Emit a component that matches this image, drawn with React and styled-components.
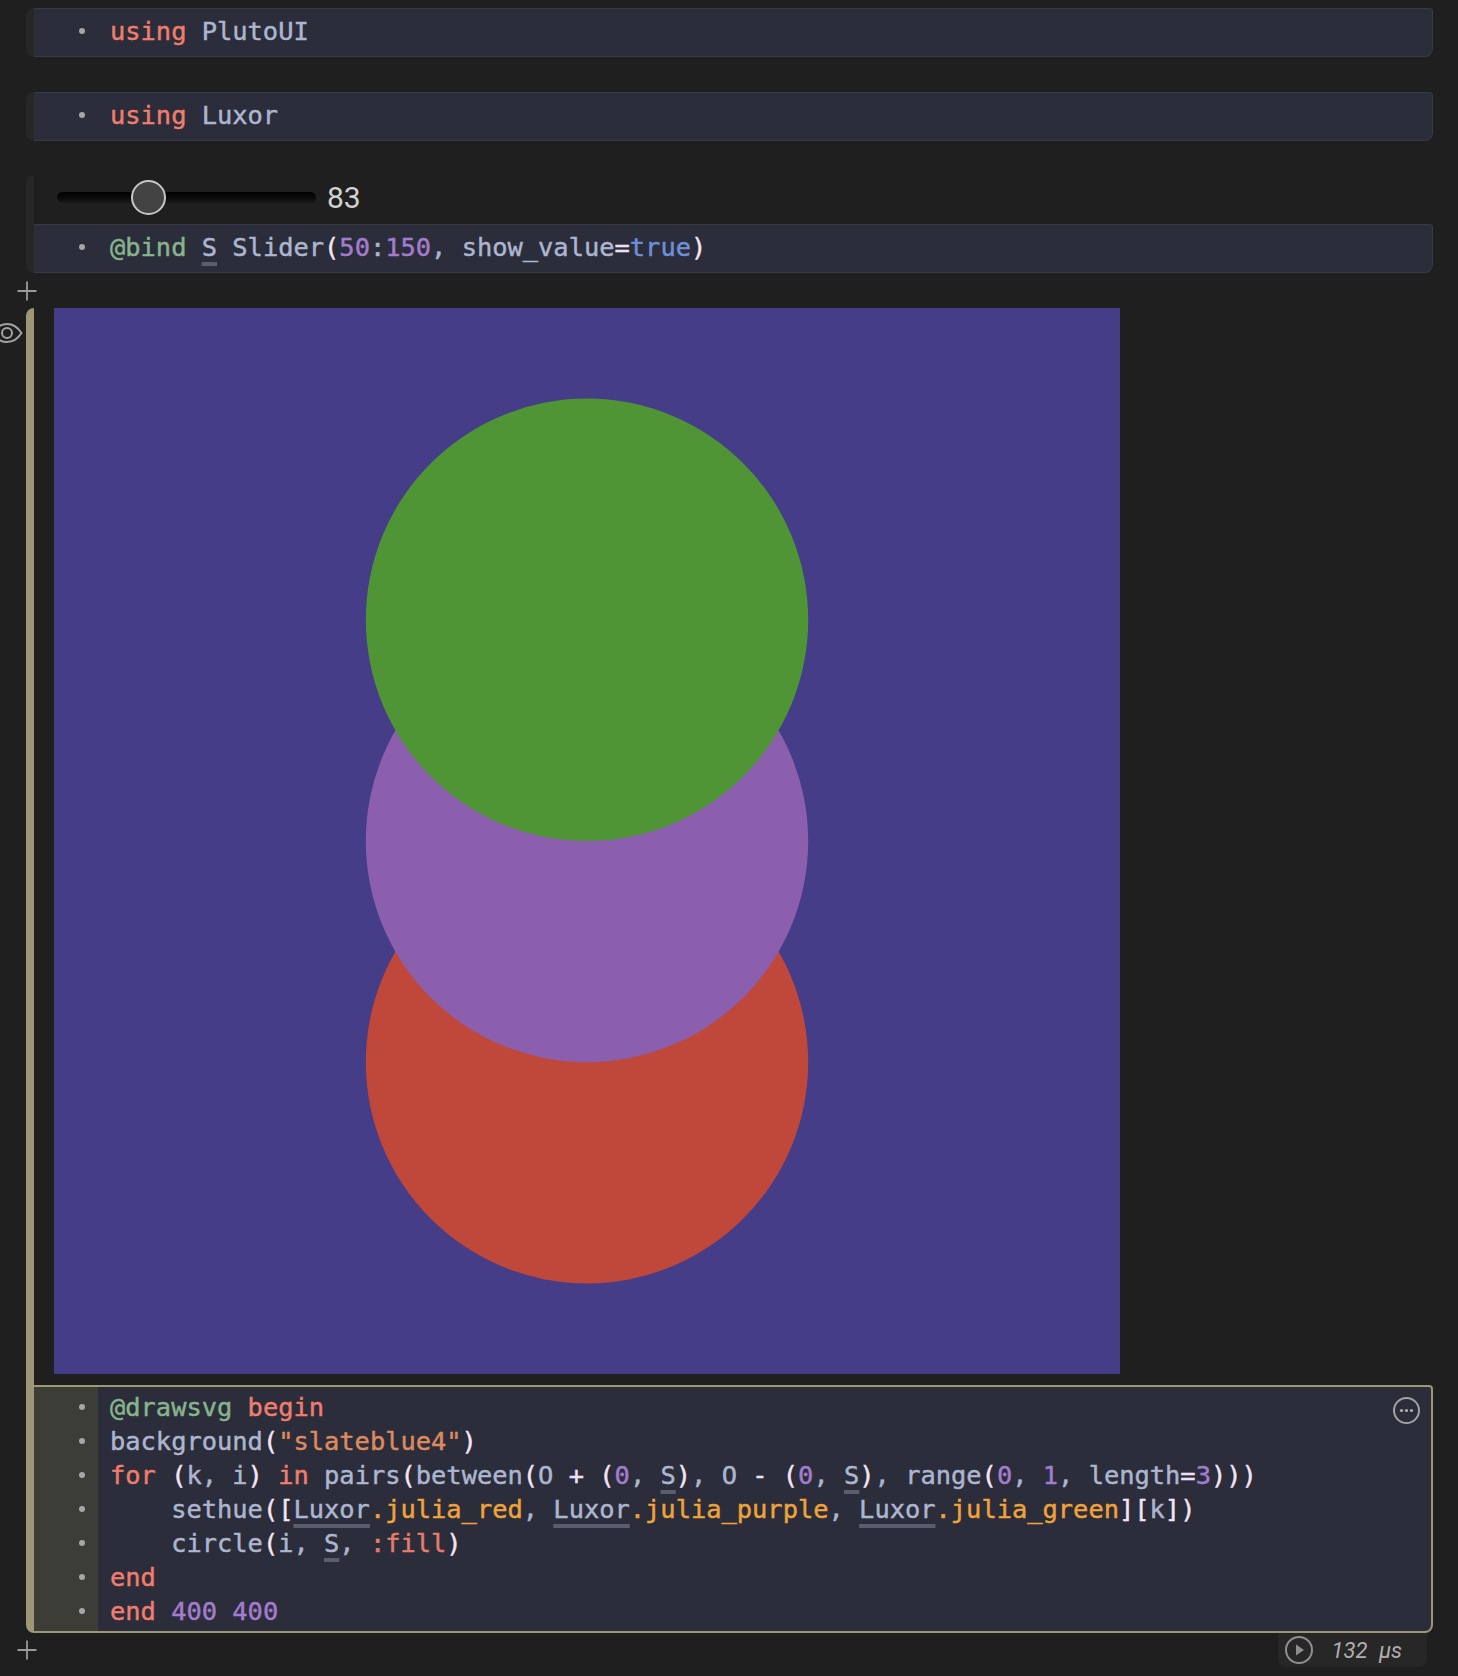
import React from 'react';
import styled, { createGlobalStyle } from 'styled-components';

const GlobalStyle = createGlobalStyle`
  html, body {
    margin: 0;
    padding: 0;
    background: #1f1f1f;
  }
  body {
    font-family: "DejaVu Sans Mono", monospace;
  }
`;

const TAN = '#9d9677';

const tokenColors = {
  kw: '#f07d6d',
  macro: '#87b48d',
  id: '#adb6d0',
  paren: '#f5e4f3',
  num: '#a47ccd',
  str: '#de8a60',
  bool: '#6f8fd8',
  op: '#ece0f6',
  field: '#f0a33a',
  sym: '#e47d6a',
};

const Notebook = styled.main`
  display: flex;
  flex-direction: column;
  width: 1458px;
  min-height: 1676px;
  box-sizing: border-box;
  padding: 8px 25px 0 26px;
  background: #1f1f1f;
`;

const Cell = styled.section`
  position: relative;
  display: flex;
  margin-bottom: ${(p) => p.$gap || 0}px;
`;

const Shoulder = styled.div`
  flex: 0 0 8px;
  border-radius: 8px 0 0 8px;
  background: ${(p) => (p.$focused ? TAN : '#272727')};
`;

const CellBody = styled.div`
  flex: 1;
  min-width: 0;
  display: flex;
  flex-direction: column;
`;

const SliderOutput = styled.div`
  display: flex;
  align-items: center;
  gap: 11px;
  height: 49px;
  box-sizing: border-box;
  padding: 0 0 5px 23px;
`;

const Range = styled.input`
  -webkit-appearance: none;
  appearance: none;
  width: 259px;
  height: 36px;
  margin: 0;
  background: transparent;

  &::-webkit-slider-runnable-track {
    height: 11px;
    border-radius: 6px;
    background: linear-gradient(to bottom, #000 0%, #0c0c0c 60%, #1a1a1a 100%);
  }

  &::-webkit-slider-thumb {
    -webkit-appearance: none;
    width: 35px;
    height: 35px;
    margin-top: -12px;
    box-sizing: border-box;
    border-radius: 50%;
    border: 2px solid #c6c6c6;
    background: #434343;
  }
`;

const RangeValue = styled.span`
  font-family: Roboto, "Liberation Sans", sans-serif;
  font-size: 30px;
  color: #d2d2d2;
`;

const ImageOutput = styled.div`
  padding: 0 0 11px 20px;
`;

const Drawing = styled.svg`
  display: block;
`;

const Input = styled.div`
  position: relative;
  display: flex;
  background: #2b2d3a;
  border: ${(p) => (p.$focused ? `2px solid ${TAN}` : '1px solid #373945')};
  border-left: none;
  border-radius: 0 4px 8px 0;

  & > * {
    padding: ${(p) => (p.$focused ? '3px 0 3px' : '5px 0 8px')};
  }
`;

const Gutter = styled.div`
  flex: 0 0 64px;
  display: flex;
  flex-direction: column;
  background: ${(p) => (p.$focused ? '#3c3d36' : 'transparent')};
`;

const Bullet = styled.div`
  height: 34px;
  display: flex;
  align-items: center;
  justify-content: flex-end;
  padding-right: 13px;

  &::before {
    content: '';
    width: 6px;
    height: 6px;
    border-radius: 50%;
    background: #a6a6a6;
  }
`;

const Code = styled.pre`
  flex: 1;
  margin: 0;
  padding-left: 12px !important;
  font-family: "DejaVu Sans Mono", monospace;
  font-size: 25.4px;
  line-height: 34px;
  color: ${tokenColors.id};
  -webkit-text-stroke: 0.45px currentColor;
  white-space: pre;
`;

const Tok = styled.span`
  color: ${(p) => tokenColors[p.$t] || tokenColors.id};
`;

const Ref = styled.span`
  text-decoration: underline;
  text-decoration-color: #5a5d6e;
  text-decoration-thickness: 4px;
  text-underline-offset: 6px;
  text-decoration-skip-ink: none;
`;

const MoreButton = styled.button`
  position: absolute;
  top: 10px;
  right: 11px;
  width: 27px;
  height: 27px;
  padding: 0 !important;
  display: flex;
  align-items: center;
  justify-content: center;
  background: transparent;
  border: 2px solid #a2a2a2;
  border-radius: 50%;
  box-sizing: border-box;
`;

const AddRow = styled.div`
  display: flex;
  align-items: center;
  height: 35px;
  margin-left: -9px;
`;

const Footer = styled.div`
  display: flex;
  align-items: center;
  justify-content: space-between;
  height: 34px;
  margin-left: -9px;
`;

const Runtime = styled.div`
  display: flex;
  align-items: center;
  gap: 19px;
  height: 34px;
  box-sizing: border-box;
  padding: 0 25px 0 7px;
  margin-right: 6px;
  background: #272727;
  border-radius: 0 0 8px 8px;
  font-family: Roboto, "Liberation Sans", sans-serif;
  font-style: italic;
  font-size: 22px;
  color: #b3aeae;
  word-spacing: 6px;
`;

const EyeToggle = styled.div`
  position: absolute;
  left: -35px;
  top: 14px;
  display: flex;
`;

function PlusIcon() {
  return (
    <svg width="20" height="20" viewBox="0 0 20 20">
      <path d="M10 0.5V19.5M0.5 10H19.5" stroke="#9a9a9a" strokeWidth="1.8" />
    </svg>
  );
}

function EyeIcon() {
  return (
    <svg width="32" height="22" viewBox="0 0 32 22" fill="none" stroke="#a3a3a3" strokeWidth="2">
      <path d="M1.5 11C6 4 11 2 16 2s10 2 14.5 9C26 18 21 20 16 20S6 18 1.5 11Z" />
      <circle cx="16" cy="11" r="5" />
    </svg>
  );
}

function DotsIcon() {
  return (
    <svg width="15" height="5" viewBox="0 0 15 5">
      <circle cx="2.5" cy="2.5" r="1.6" fill="#b0b0b0" />
      <circle cx="7.5" cy="2.5" r="1.6" fill="#b0b0b0" />
      <circle cx="12.5" cy="2.5" r="1.6" fill="#b0b0b0" />
    </svg>
  );
}

function PlayIcon() {
  return (
    <svg width="28" height="28" viewBox="0 0 28 28" fill="none">
      <circle cx="14" cy="14" r="13" stroke="#8f8f8f" strokeWidth="2" />
      <path d="M11 8.5L19 14L11 19.5Z" fill="#8f8f8f" />
    </svg>
  );
}

function CodeInput({ lines, focused, children }) {
  return (
    <Input $focused={focused}>
      <Gutter $focused={focused}>
        {Array.from({ length: lines }).map((_, i) => (
          <Bullet key={i} />
        ))}
      </Gutter>
      <Code>{children}</Code>
      {focused && (
        <MoreButton aria-label="more">
          <DotsIcon />
        </MoreButton>
      )}
    </Input>
  );
}

const S = 83;
const julia = [
  { name: 'red', fill: '#bf483b' },
  { name: 'purple', fill: '#8b5fad' },
  { name: 'green', fill: '#4f9536' },
];

function LuxorDrawing() {
  // between(O + (0, S), O - (0, S), range(0, 1, length=3))
  const circles = julia.map((c, k) => ({
    ...c,
    cy: 200 + S - k * S,
  }));
  return (
    <Drawing width="1066" height="1066" viewBox="0 0 400 400">
      <rect width="400" height="400" fill="#463d88" />
      {circles.map((c) => (
        <circle key={c.name} cx="200" cy={c.cy} r={S} fill={c.fill} />
      ))}
    </Drawing>
  );
}

export default function App() {
  return (
    <>
      <GlobalStyle />
      <Notebook>
        <Cell $gap={35}>
          <Shoulder />
          <CellBody>
            <CodeInput lines={1}>
              <Tok $t="kw">using</Tok> PlutoUI
            </CodeInput>
          </CellBody>
        </Cell>

        <Cell $gap={34}>
          <Shoulder />
          <CellBody>
            <CodeInput lines={1}>
              <Tok $t="kw">using</Tok> Luxor
            </CodeInput>
          </CellBody>
        </Cell>

        <Cell>
          <Shoulder />
          <CellBody>
            <SliderOutput>
              <Range type="range" min={50} max={150} defaultValue={S} />
              <RangeValue>{S}</RangeValue>
            </SliderOutput>
            <CodeInput lines={1}>
              <Tok $t="macro">@bind</Tok> <Ref>S</Ref> Slider<Tok $t="paren">(</Tok>
              <Tok $t="num">50</Tok>:<Tok $t="num">150</Tok>, show_value<Tok $t="op">=</Tok>
              <Tok $t="bool">true</Tok>
              <Tok $t="paren">)</Tok>
            </CodeInput>
          </CellBody>
        </Cell>

        <AddRow>
          <PlusIcon />
        </AddRow>

        <Cell>
          <EyeToggle>
            <EyeIcon />
          </EyeToggle>
          <Shoulder $focused />
          <CellBody>
            <ImageOutput>
              <LuxorDrawing />
            </ImageOutput>
            <CodeInput lines={7} focused>
              <Tok $t="macro">@drawsvg</Tok> <Tok $t="kw">begin</Tok>
              {'\n'}background<Tok $t="paren">(</Tok>
              <Tok $t="str">"slateblue4"</Tok>
              <Tok $t="paren">)</Tok>
              {'\n'}
              <Tok $t="kw">for</Tok> <Tok $t="paren">(</Tok>k, i<Tok $t="paren">)</Tok>{' '}
              <Tok $t="kw">in</Tok> pairs<Tok $t="paren">(</Tok>between<Tok $t="paren">(</Tok>O{' '}
              <Tok $t="op">+</Tok> <Tok $t="paren">(</Tok>
              <Tok $t="num">0</Tok>, <Ref>S</Ref>
              <Tok $t="paren">)</Tok>, O <Tok $t="op">-</Tok> <Tok $t="paren">(</Tok>
              <Tok $t="num">0</Tok>, <Ref>S</Ref>
              <Tok $t="paren">)</Tok>, range<Tok $t="paren">(</Tok>
              <Tok $t="num">0</Tok>, <Tok $t="num">1</Tok>, length<Tok $t="op">=</Tok>
              <Tok $t="num">3</Tok>
              <Tok $t="paren">)))</Tok>
              {'\n    '}sethue<Tok $t="paren">([</Tok>
              <Ref>Luxor</Ref>
              <Tok $t="field">.julia_red</Tok>, <Ref>Luxor</Ref>
              <Tok $t="field">.julia_purple</Tok>, <Ref>Luxor</Ref>
              <Tok $t="field">.julia_green</Tok>
              <Tok $t="paren">][</Tok>k<Tok $t="paren">])</Tok>
              {'\n    '}circle<Tok $t="paren">(</Tok>i, <Ref>S</Ref>, <Tok $t="sym">:fill</Tok>
              <Tok $t="paren">)</Tok>
              {'\n'}
              <Tok $t="kw">end</Tok>
              {'\n'}
              <Tok $t="kw">end</Tok> <Tok $t="num">400</Tok> <Tok $t="num">400</Tok>
            </CodeInput>
          </CellBody>
        </Cell>

        <Footer>
          <PlusIcon />
          <Runtime>
            <PlayIcon />
            <span>132 µs</span>
          </Runtime>
        </Footer>
      </Notebook>
    </>
  );
}
